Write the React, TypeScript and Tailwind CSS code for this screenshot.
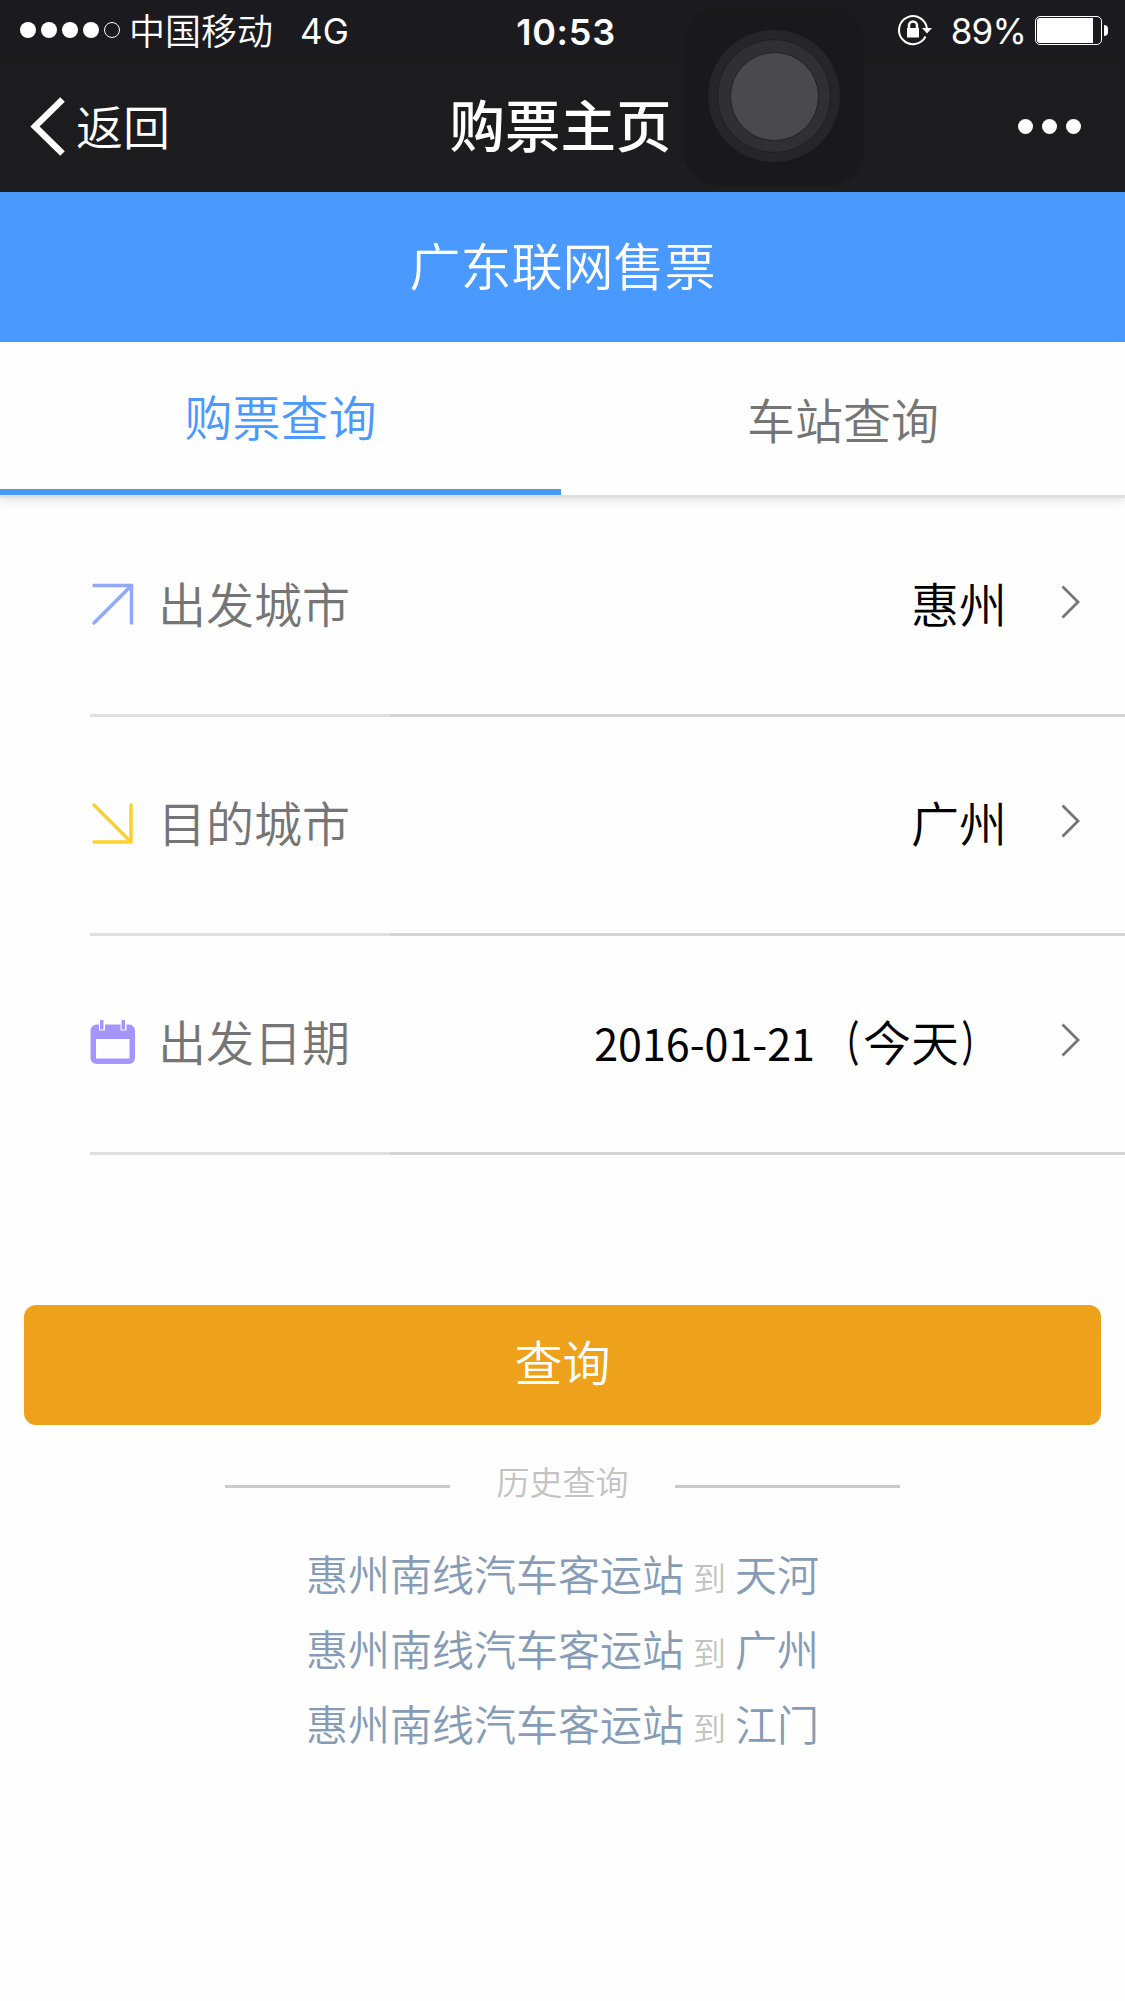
import React from "react";

interface Field {
  label: string;
  icon: React.ReactNode;
  value: React.ReactNode;
}

interface Trip {
  from: string;
  to: string;
}

const fields: Field[] = [
  {
    label: "出发城市",
    icon: (
      <svg width="46" height="46" viewBox="0 0 46 46" fill="none" stroke="#91a9f8" strokeWidth="3.5" strokeLinecap="round">
        <path d="M4 4.5H41.5V42M41 5L4 42" />
      </svg>
    ),
    value: "惠州",
  },
  {
    label: "目的城市",
    icon: (
      <svg width="46" height="46" viewBox="0 0 46 46" fill="none" stroke="#fbd22b" strokeWidth="3.5" strokeLinecap="round">
        <path d="M4 42H41V5M41 42L4 5" />
      </svg>
    ),
    value: "广州",
  },
  {
    label: "出发日期",
    icon: (
      <svg width="46" height="46" viewBox="0 0 46 46" fill="#a695ff">
        <path
          fillRule="evenodd"
          d="M7 5.5H9V11.5H15V5.5H30.5V11.5H36.5V5.5H38.5Q45 6 45 12V38.5Q45 45 38.5 45H7Q.5 45 .5 38.5V12Q.5 6 7 5.5ZM6 20V39.5H39.5V20Z"
        />
        <rect x="10" y="1" width="3.5" height="9.5" />
        <rect x="31.5" y="1" width="3.5" height="9.5" />
      </svg>
    ),
    value: (
      <>
        <span className="text-[43px] font-normal">2016-01-21</span>
        <span className="inline-block origin-[80%_50%] scale-x-[0.62] font-medium">（</span>
        今天
        <span className="inline-block origin-[14%_50%] scale-x-[0.62] font-medium">）</span>
      </>
    ),
  },
];

const history: Trip[] = [
  { from: "惠州南线汽车客运站", to: "天河" },
  { from: "惠州南线汽车客运站", to: "广州" },
  { from: "惠州南线汽车客运站", to: "江门" },
];

function StatusBar() {
  return (
    <div className="grid h-[60px] grid-cols-[1fr_auto_1fr] items-center pl-5 pr-[17px] font-['Inter','Noto_Sans_CJK_SC',sans-serif] text-[36px] font-normal leading-none">
      <div className="flex items-center">
        <div className="flex gap-[5px]">
          {[0, 1, 2, 3].map((dot) => (
            <span key={dot} className="size-4 rounded-full bg-white"></span>
          ))}
          <span className="size-4 rounded-full border border-white"></span>
        </div>
        <span className="ml-[9px] pb-[2px] font-['Noto_Sans_CJK_SC',sans-serif] text-[36px] font-[350]">中国移动</span>
        <span className="ml-[27px] pt-[3px] text-[35px]">4G</span>
      </div>

      <span className="ml-[4px] pt-[3px] text-[36px] font-semibold tracking-[0.7px]">10:53</span>

      <div className="flex items-center justify-end">
        <svg width="36" height="32" viewBox="0 0 36 32" fill="none" stroke="white" strokeWidth="2">
          <path d="M28.5 22.5A14 14 0 1 1 30 15" />
          <path d="M25 14H35L30 19.5Z" fill="white" stroke="none" />
          <rect x="10" y="14" width="12" height="9.5" fill="white" stroke="none" />
          <path d="M12 15V11.5A4 4 0 0 1 20 11.5V15" strokeWidth="2.5" />
        </svg>
        <span className="ml-[18px] pt-[3px] text-[35px] tracking-[-0.8px]">89%</span>
        <div className="ml-[9px] h-[29px] w-[67px] rounded-[5px] border border-white p-px">
          <div className="h-full w-[56px] rounded-l-[3px] bg-white"></div>
        </div>
        <div className="ml-[2px] h-[11px] w-[4px] rounded-r-full bg-white"></div>
      </div>
    </div>
  );
}

function NavBar() {
  return (
    <div className="grid h-[132px] grid-cols-[1fr_auto_1fr] items-center pl-[30px] pr-[44px]">
      <div className="flex items-center gap-[11px]">
        <svg width="35" height="60" viewBox="0 0 35 60" fill="none" stroke="white" strokeWidth="6.5">
          <path d="M32.500 3.500L5 30.500L32.500 57.500" />
        </svg>
        <span className="pb-[3px] text-[47px] leading-none">返回</span>
      </div>
      <h1 className="ml-[10px] pb-[5px] text-[55.5px] font-medium leading-none">购票主页</h1>
      <div className="flex justify-end gap-[9px]">
        {[0, 1, 2].map((dot) => (
          <span key={dot} className="size-[15px] rounded-full bg-white"></span>
        ))}
      </div>
    </div>
  );
}

/* floating AssistiveTouch button */
function TouchButton() {
  return (
    <div className="absolute left-[684px] top-[6px] flex size-[180px] items-center justify-center rounded-[36px] bg-[#19191b]">
      <div className="flex size-[132px] items-center justify-center rounded-full bg-[#262629]">
        <div className="flex size-[114px] items-center justify-center rounded-full border border-[#1f1f22] bg-[#303033]">
          <div className="size-[89px] rounded-full border border-[#232326] bg-[#4a4a4d]"></div>
        </div>
      </div>
    </div>
  );
}

export default function App() {
  return (
    <div className="min-h-[2001px] w-[1125px] bg-[#fefefe] font-['Noto_Sans_CJK_SC',sans-serif] font-[350] text-black">
      <header className="relative h-[192px] bg-gradient-to-b from-[#1b1a1f] to-[#1d1d1e] text-white">
        <TouchButton />
        <div className="relative">
          <StatusBar />
          <NavBar />
        </div>
      </header>

      {/* Banner */}
      <div className="flex h-[150px] items-center justify-center bg-[#4a99ff] pb-[5px] text-[51px] leading-none text-white">
        广东联网售票
      </div>

      {/* Tabs */}
      <nav className="flex h-[156px] border-b-[3px] border-[#e0e0e0] text-[48px] leading-none shadow-[0_3px_9px_rgba(0,0,0,0.1)]">
        <div className="flex w-[561px] items-center justify-center border-b-[6px] border-[#4a99ff] pb-[2px] text-[#4a99ff]">
          购票查询
        </div>
        <div className="flex flex-1 items-center justify-center pb-[2px] text-[#757575]">车站查询</div>
      </nav>

      {/* Search form */}
      <div className="pl-[90px] text-[48px] leading-none">
        {fields.map((field) => (
          <div key={field.label}>
            <div className="flex h-[216px] items-center pb-[9px] pr-[44px]">
              <span className="flex pt-[5px]">{field.icon}</span>
              <span className="ml-[22px] text-[#757575]">{field.label}</span>
              <span className="ml-auto">{field.value}</span>
              <svg className="ml-[54px]" width="20" height="34" viewBox="0 0 20 34" fill="none" stroke="#757575" strokeWidth="2.8">
                <path d="M1.5 1.5L17 17L1.5 32.5" />
              </svg>
            </div>
            <div className="flex h-[3px] bg-[#d3d3d3]">
              <div className="w-[300px] bg-[#e0e0e0]"></div>
            </div>
          </div>
        ))}
      </div>

      <button className="mx-6 mt-[150px] flex h-[120px] w-[1077px] items-center justify-center rounded-xl bg-[#eea11b] pb-[10px] text-[48px] leading-none text-white">
        查询
      </button>

      {/* Search history */}
      <section className="mt-[36px]">
        <div className="flex items-center justify-center text-[#c3c3c3]">
          <span className="h-[3px] w-[225px] bg-[#cbcbcb]"></span>
          <h2 className="w-[225px] pb-[11px] text-center text-[33px] font-[350] leading-[40px]">历史查询</h2>
          <span className="h-[3px] w-[225px] bg-[#cbcbcb]"></span>
        </div>
        <ul className="mt-[23px] text-[42px] text-[#869cb6]">
          {history.map((trip) => (
            <li key={trip.to} className="flex h-[75px] items-baseline justify-center gap-[9px] leading-[75px]">
              <span>{trip.from}</span>
              <span className="text-[33px] text-[#c3c3c3]">到</span>
              <span>{trip.to}</span>
            </li>
          ))}
        </ul>
      </section>
    </div>
  );
}
